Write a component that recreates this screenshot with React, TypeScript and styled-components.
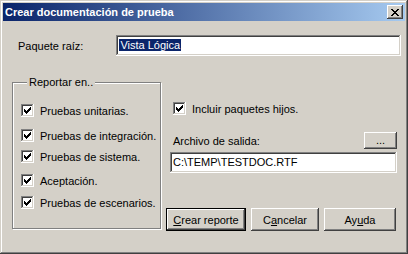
import React from "react";
import styled, { createGlobalStyle } from "styled-components";

const GlobalStyle = createGlobalStyle`
  html, body {
    margin: 0;
    padding: 0;
    background: #d4d0c8;
  }
  body {
    font-family: "Liberation Sans", Arial, sans-serif;
    font-size: 11px;
    color: #000;
  }
`;

const Window = styled.div`
  width: 408px;
  height: 254px;
  box-sizing: border-box;
  padding: 3px;
  background: #d4d0c8;
  display: flex;
  flex-direction: column;
  box-shadow: inset -1px -1px #404040, inset 1px 1px #d4d0c8,
    inset -2px -2px #808080, inset 2px 2px #ffffff;
`;

const TitleBar = styled.div`
  height: 18px;
  display: flex;
  align-items: center;
  justify-content: space-between;
  padding: 0 2px;
  background: linear-gradient(to right, #0a246a, #a6caf0);
`;

const Title = styled.span`
  font-family: "Liberation Sans", Arial, sans-serif;
  font-weight: bold;
  font-size: 11px;
  color: #fff;
`;

const raised = `
  background: #d4d0c8;
  box-shadow: inset -1px -1px #404040, inset 1px 1px #ffffff,
    inset -2px -2px #808080, inset 2px 2px #d4d0c8;
`;

const CloseButton = styled.button`
  ${raised}
  width: 16px;
  height: 14px;
  border: 0;
  padding: 0;
  display: flex;
  align-items: center;
  justify-content: center;
`;

const Body = styled.div`
  flex: 1;
  display: flex;
  flex-direction: column;
  padding: 14px 0 0 9px;
`;

const RootRow = styled.div`
  display: flex;
  align-items: center;
  height: 21px;
`;

const Label = styled.span<{ $indent?: number }>`
  margin-left: ${(p) => p.$indent ?? 0}px;
  white-space: nowrap;
`;

const TextField = styled.div<{ $width: number; $indent?: number; $top?: number }>`
  width: ${(p) => p.$width}px;
  height: 21px;
  box-sizing: border-box;
  margin-left: ${(p) => p.$indent ?? 0}px;
  margin-top: ${(p) => p.$top ?? 0}px;
  padding: 3px 3px 0;
  background: #fff;
  box-shadow: inset -1px -1px #ffffff, inset 1px 1px #808080,
    inset -2px -2px #d4d0c8, inset 2px 2px #404040;
  white-space: nowrap;
  line-height: 14px;
`;

const Selected = styled.span`
  background: #0a246a;
  color: #fff;
  padding: 0 1px;
`;

const Main = styled.div`
  display: grid;
  grid-template-columns: 149px 1fr;
  column-gap: 7px;
  margin-top: 20px;
`;

const GroupBox = styled.fieldset`
  margin: 0;
  padding: 0 0 0 8px;
  height: 153px;
  box-sizing: border-box;
  border: 1px solid #808080;
  box-shadow: 1px 1px 0 #fff, inset 1px 1px 0 #fff;
  display: flex;
  flex-direction: column;
`;

const Legend = styled.legend`
  padding: 0 2px;
  margin-left: 6px;
  background: #d4d0c8;
  line-height: 13px;
`;

const CheckRow = styled.label<{ $top: number; $indent?: number }>`
  display: flex;
  align-items: center;
  gap: 6px;
  height: 13px;
  margin-top: ${(p) => p.$top}px;
  margin-left: ${(p) => p.$indent ?? 0}px;
  white-space: nowrap;
`;

const Box = styled.span`
  width: 13px;
  height: 13px;
  flex: none;
  box-sizing: border-box;
  background: #fff;
  display: flex;
  align-items: center;
  justify-content: center;
  box-shadow: inset -1px -1px #ffffff, inset 1px 1px #808080,
    inset -2px -2px #d4d0c8, inset 2px 2px #404040;
`;

const RightCol = styled.div`
  display: flex;
  flex-direction: column;
`;

const FileRow = styled.div`
  display: flex;
  align-items: center;
  justify-content: space-between;
  width: 229px;
  height: 17px;
  margin-top: 17px;
`;

const PushButton = styled.button<{ $width: number; $default?: boolean }>`
  ${raised}
  width: ${(p) => p.$width}px;
  height: 23px;
  border: 0;
  padding: 0;
  font-family: "Liberation Sans", Arial, sans-serif;
  font-size: 11px;
  color: #000;
  ${(p) =>
    p.$default &&
    `box-shadow: inset 0 0 0 1px #000, inset -2px -2px #404040, inset 2px 2px #ffffff,
      inset -3px -3px #808080, inset 3px 3px #d4d0c8;`}
`;

const SmallButton = styled(PushButton)`
  height: 17px;
  line-height: 8px;
  padding-bottom: 2px;
`;

const ButtonRow = styled.div`
  display: flex;
  gap: 5px;
  margin-top: 35px;
  margin-left: -2px;
`;

const Check = () => (
  <svg width="9" height="9" viewBox="0 0 9 9" shapeRendering="crispEdges">
    <path d="M1 3v3l2 2l5-5v-3l-5 5z" fill="#000" />
  </svg>
);

const CloseGlyph = () => (
  <svg width="8" height="7" viewBox="0 0 8 7" shapeRendering="crispEdges">
    <path
      d="M0 0h2v1h1v1h2v-1h1v-1h2v1h-1v1h-1v1h-1v1h1v1h1v1h1v1h-2v-1h-1v-1h-2v1h-1v1h-2v-1h1v-1h1v-1h1v-1h-1v-1h-1v-1h-1z"
      fill="#000"
    />
  </svg>
);

const Checkbox: React.FC<{ label: string; top: number; indent?: number }> = ({
  label,
  top,
  indent,
}) => (
  <CheckRow $top={top} $indent={indent}>
    <Box>
      <Check />
    </Box>
    <span>{label}</span>
  </CheckRow>
);

export default function App() {
  return (
    <>
      <GlobalStyle />
      <Window>
        <TitleBar>
          <Title>Crear documentación de prueba</Title>
          <CloseButton aria-label="Cerrar">
            <CloseGlyph />
          </CloseButton>
        </TitleBar>
        <Body>
          <RootRow>
            <Label $indent={6}>Paquete raíz:</Label>
            <TextField $width={285} $indent={33}>
              <Selected>Vista Lógica</Selected>
            </TextField>
          </RootRow>
          <Main>
            <GroupBox>
              <Legend>Reportar en..</Legend>
              <Checkbox label="Pruebas unitarias." top={15} />
              <Checkbox label="Pruebas de integración." top={12} />
              <Checkbox label="Pruebas de sistema." top={8} />
              <Checkbox label="Aceptación." top={11} />
              <Checkbox label="Pruebas de escenarios." top={9} />
            </GroupBox>
            <RightCol>
              <Checkbox label="Incluir paquetes hijos." top={26} indent={5} />
              <FileRow>
                <Label $indent={5}>Archivo de salida:</Label>
                <SmallButton $width={33}>...</SmallButton>
              </FileRow>
              <TextField $width={227} $indent={2} $top={3}>
                C:\TEMP\TESTDOC.RTF
              </TextField>
              <ButtonRow>
                <PushButton $width={80} $default>
                  <u>C</u>rear reporte
                </PushButton>
                <PushButton $width={68}>
                  C<u>a</u>ncelar
                </PushButton>
                <PushButton $width={72}>
                  Ay<u>u</u>da
                </PushButton>
              </ButtonRow>
            </RightCol>
          </Main>
        </Body>
      </Window>
    </>
  );
}
